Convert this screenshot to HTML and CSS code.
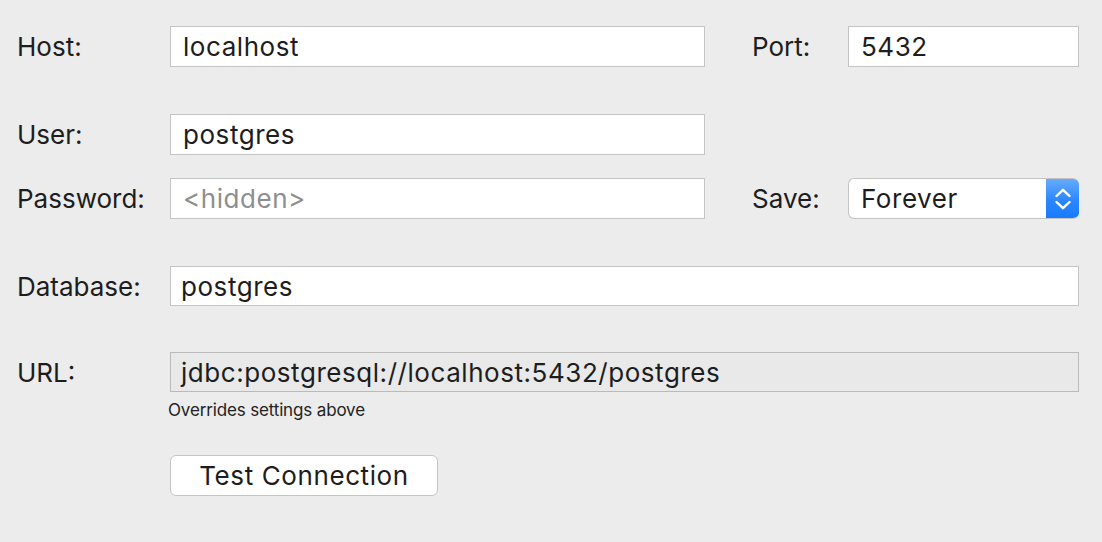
FILE: index.html
```html
<!DOCTYPE html>
<html>
<head>
<meta charset="utf-8">
<link rel="stylesheet" href="styles.css">
</head>
<body>
<div class="form">
  <div class="row r-host">
    <span class="label">Host:</span>
    <div class="field f-main">localhost</div>
    <span class="label label2">Port:</span>
    <div class="field f-side">5432</div>
  </div>
  <div class="row r-user">
    <span class="label">User:</span>
    <div class="field f-main">postgres</div>
  </div>
  <div class="row r-pass">
    <span class="label">Password:</span>
    <div class="field f-main placeholder">&lt;hidden&gt;</div>
    <span class="label label2">Save:</span>
    <div class="select">
      <span class="select-text">Forever</span>
      <span class="select-btn">
        <svg width="16" height="22" viewBox="0 0 16 22"><path d="M1.5 8 L8 1.8 L14.5 8" fill="none" stroke="#fff" stroke-width="2.4" stroke-linecap="round" stroke-linejoin="round"/><path d="M1.5 14 L8 20.2 L14.5 14" fill="none" stroke="#fff" stroke-width="2.4" stroke-linecap="round" stroke-linejoin="round"/></svg>
      </span>
    </div>
  </div>
  <div class="row r-db">
    <span class="label">Database:</span>
    <div class="field f-wide">postgres</div>
  </div>
  <div class="row r-url">
    <span class="label">URL:</span>
    <div class="field f-wide url">jdbc:postgresql://localhost:5432/postgres</div>
  </div>
  <div class="hint">Overrides settings above</div>
  <div class="btn-row">
    <button class="btn">Test Connection</button>
  </div>
</div>
</body>
</html>
```

FILE: styles.css
```css
html, body {
  margin: 0;
  padding: 0;
  background: #ececec;
}
body {
  font-family: Inter, "Noto Sans", "Liberation Sans", sans-serif;
  color: #1d1d1d;
  width: 1102px;
  height: 542px;
  overflow: hidden;
}
.form {
  padding: 26px 23px 0 17px;
  display: flex;
  flex-direction: column;
}
.row {
  display: flex;
  align-items: center;
  height: 41px;
}
.r-user { margin-top: 47px; }
.r-pass { margin-top: 23px; }
.r-db { margin-top: 47px; height: 40px; }
.r-url { margin-top: 46px; height: 40px; }
.label {
  width: 153px;
  font-size: 26px;
  letter-spacing: 0;
  flex: none;
}
.label2 {
  width: 96px;
  margin-left: 47px;
}
.field {
  box-sizing: border-box;
  height: 100%;
  background: #fff;
  border: 1.5px solid #c4c4c4;
  font-size: 26px;
  padding: 0 0 0 12px;
  display: flex;
  align-items: center;
  letter-spacing: 0.55px;
}
.f-main { width: 535px; }
.f-side { width: 231px; }
.f-wide { width: 909px; padding-left: 10px; }
.placeholder { color: #8e8e8e; }
.url {
  background: #e9e9e9;
  border-color: #bababa;
}
.select {
  box-sizing: border-box;
  width: 231px;
  height: 100%;
  display: flex;
  align-items: stretch;
  background: #fff;
  border: 1.5px solid #c4c4c4;
  border-right: none;
  border-radius: 6px;
  overflow: hidden;
}
.select-text {
  flex: 1;
  display: flex;
  align-items: center;
  padding-left: 12px;
  font-size: 26px;
  letter-spacing: 0.55px;
}
.select-btn {
  width: 33px;
  display: flex;
  align-items: center;
  justify-content: center;
  background: linear-gradient(#69adfd, #2a86fd 55%, #167afd);
  margin: -1.5px 0;
  border-radius: 0 6px 6px 0;
}
.hint {
  margin-top: 8px;
  margin-left: 151px;
  font-size: 17px;
  line-height: 20px;
  letter-spacing: -0.15px;
  color: #222;
}
.btn-row {
  margin-top: 35px;
  padding-left: 153px;
}
.btn {
  box-sizing: border-box;
  width: 268px;
  height: 41px;
  background: #fff;
  border: 1.5px solid #c4c4c4;
  border-radius: 6px;
  font-family: Inter, "Noto Sans", "Liberation Sans", sans-serif;
  font-size: 26px;
  color: #1d1d1d;
  letter-spacing: 0.6px;
  padding: 0;
}
```
